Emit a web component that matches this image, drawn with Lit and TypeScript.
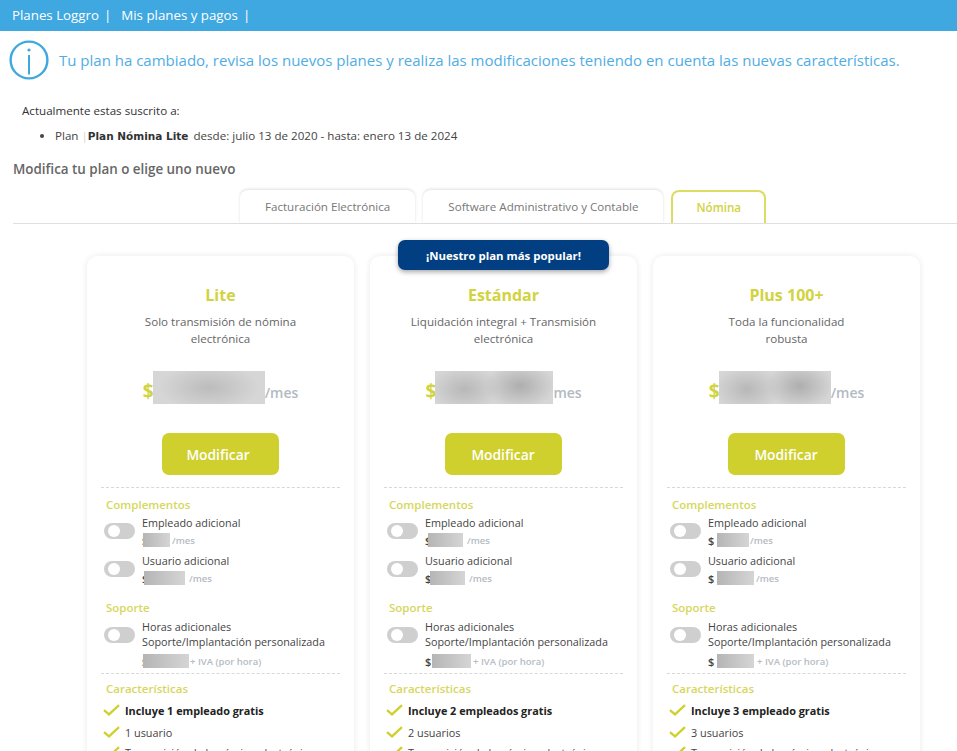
import { LitElement, html, css } from "lit";
import { customElement } from "lit/decorators.js";

interface Small { d: number; w: number; gap: number; }
interface Plan {
  name: string; desc: string[]; blur: number; mes: string; chk: string; users: string;
  e: Small; u: Small; s: Small; popular?: boolean; two?: boolean; btnPad: number;
}

const plans: Plan[] = [
  { name: "Lite", desc: ["Solo transmisión de nómina", "electrónica"], blur: 112, mes: "/mes", chk: "Incluye 1 empleado gratis", users: "1 usuario",
    e: { d: 1, w: 27, gap: 2 }, u: { d: 2, w: 41, gap: 4 }, s: { d: 1, w: 46, gap: 1 }, btnPad: 5 },
  { name: "Estándar", desc: ["Liquidación integral + Transmisión", "electrónica"], blur: 118, mes: "mes", chk: "Incluye 2 empleados gratis", users: "2 usuarios",
    e: { d: 3, w: 35, gap: 4 }, u: { d: 5, w: 35, gap: 4 }, s: { d: 7, w: 39, gap: 2 }, popular: true, two: true, btnPad: 1 },
  { name: "Plus 100+", desc: ["Toda la funcionalidad", "robusta"], blur: 112, mes: "/mes", chk: "Incluye 3 empleado gratis", users: "3 usuarios",
    e: { d: 9, w: 32, gap: 1 }, u: { d: 9, w: 37, gap: 2 }, s: { d: 9, w: 37, gap: 3 }, two: true, btnPad: 1 },
];

@customElement("app-root")
export class AppRoot extends LitElement {
  static styles = css`
    :host { display: block; width: 957px; height: 751px; overflow: hidden; background: #fff; font-family: "Open Sans", sans-serif; color: #444; }
    .bar { height: 31px; background: #3fa8e0; color: #fff; font-size: 13.3px; display: flex; align-items: center; padding-left: 12px; gap: 5px; box-sizing: border-box; padding-bottom: 1px; }
    .bar .sep { margin-right: 5px; }
    .info { display: flex; align-items: center; gap: 10px; padding: 9px 0 0 9px; height: 40px; }
    .info span { font-size: 15px; color: #50ade4; white-space: nowrap; }
    .cur { padding: 22px 0 0 22px; font-size: 11.6px; color: #333; height: 40px; }
    .cur .a { line-height: 17px; }
    .cur ul { margin: 8px 0 0; padding: 0 0 0 33px; line-height: 17px; color: #444; }
    .cur b { font-family: "DejaVu Sans", sans-serif; font-size: 10.5px; color: #333; margin-right: 2px; }
    .cur .pipe { color: #c9b9a5; font-weight: 300; }
    h2 { margin: 0; font-size: 13.4px; font-weight: 600; color: #666; padding: 17px 0 0 13px; line-height: 20px; }
    .tabs { display: flex; gap: 8px; margin: 10px 0 0 13px; padding-left: 227px; height: 34px; border-bottom: 1px solid #dfdfdf; }
    .tab { font-size: 11.6px; color: #777; background: #fff; border-radius: 8px 8px 0 0; box-shadow: 0 -1px 3px rgba(0,0,0,.13); padding: 0 25px; display: flex; align-items: center; height: 33px; margin-top: 1px; box-sizing: border-box; }
    .tab.on { color: #d1d33f; border: 2px solid #dcdc63; border-bottom: 0; box-shadow: none; padding: 0 23px; font-weight: 600; }
    .cards { display: flex; gap: 16px; padding: 32px 0 0 87px; }
    .card { position: relative; width: 267px; height: 600px; box-sizing: border-box; border-radius: 10px; box-shadow: 0 0 6px rgba(0,0,0,.09); padding: 28px 14px 0 14px; flex: none; }
    .pop { position: absolute; top: -16px; left: 28px; width: 211px; height: 30px; border-radius: 7px; background: #023f82; color: #fff; font-size: 11.4px; font-weight: 700; display: flex; align-items: center; justify-content: center; box-shadow: 0 2px 5px rgba(0,0,0,.35); }
    .name { text-align: center; font-size: 16px; font-weight: 700; color: #d1d33f; line-height: 22px; }
    .desc { text-align: center; font-size: 11.6px; color: #666; line-height: 17px; margin-top: 7px; }
    .price { display: flex; justify-content: center; align-items: center; height: 33px; margin-top: 24px; }
    .dollar { font-size: 19px; font-weight: 700; color: #d1d33f; margin-top: 6px; width: 10px; }
    .mes { font-size: 14px; font-weight: 600; color: #b3bac2; margin-top: 10px; }
    .blur { display: block; overflow: hidden; position: relative; flex: none; background: #d6d6d6; }
    .blur::after { content: ""; position: absolute; inset: 0; background: radial-gradient(ellipse 45% 70% at 50% 50%, #bcbcbc, transparent); }
    .blur.two::after { background: radial-gradient(ellipse 30% 70% at 25% 55%, #b8b8b8, transparent), radial-gradient(ellipse 30% 70% at 72% 45%, #aeaeae, transparent); }
    .btn { width: 117px; height: 42px; margin: 29px auto 0; box-sizing: border-box; background: #cfd02e; color: #fff; border-radius: 7px; font-size: 13.8px; font-weight: 600; display: flex; align-items: center; justify-content: center; }
    .dash { border-top: 1px dashed #d8d8d8; margin-top: 12px; }
    .sec { font-size: 11.5px; font-weight: 600; color: #d6d75c; padding-left: 5px; line-height: 16px; }
    .first { margin-top: 9px; }
    .row { display: flex; gap: 7px; padding-left: 3px; font-size: 10.8px; color: #444; line-height: 15px; }
    .row.one { height: 38px; }
    .tog { width: 31px; height: 16px; border-radius: 8px; background: #cfcfcf; position: relative; margin-top: 8px; flex: none; }
    .tog::after { content: ""; position: absolute; left: 4px; top: 2px; width: 12px; height: 12px; border-radius: 50%; background: #fff; }
    .small { display: flex; align-items: center; font-size: 9.5px; color: #b5bcc4; font-weight: 600; height: 18px; white-space: nowrap; padding-top: 2px; box-sizing: border-box; }
    .small.sup { height: 23px; padding-top: 1px; }
    .small .d { color: #444; font-size: 11px; flex: none; }
    .small .blur { height: 14px; background: linear-gradient(90deg, #b5b5b5, #d5d5d5); }
    .small .blur::after { display: none; }
    .chk { display: flex; align-items: center; gap: 5px; font-size: 10.85px; height: 22px; padding-left: 2px; color: #444; white-space: nowrap; }
    .chk.b { font-weight: 700; color: #222; }
    .chk.last { margin-top: -2px; }
  `;

  private check() {
    return html`<svg width="17" height="12" viewBox="0 0 17 12" fill="none"><path d="M1 6.2 L6 10.4 L16 1.2" stroke="#cfd02e" stroke-width="2.3"/></svg>`;
  }

  private small(s: Small, label: string, cls = "") {
    return html`<div class="small ${cls}"><span class="d" style="width:${s.d}px">$</span><i class="blur" style="width:${s.w}px;margin-right:${s.gap}px"></i><span>${label}</span></div>`;
  }

  private card(p: Plan) {
    return html`<div class="card">
      ${p.popular ? html`<div class="pop">¡Nuestro plan más popular!</div>` : ""}
      <div class="name">${p.name}</div>
      <div class="desc">${p.desc[0]}<br />${p.desc[1]}</div>
      <div class="price"><span class="dollar">$</span><i class="blur ${p.two ? "two" : ""}" style="width:${p.blur}px;height:33px"></i><span class="mes">${p.mes}</span></div>
      <div class="btn" style="padding-right:${p.btnPad}px">Modificar</div>
      <div class="dash"></div>
      <div class="sec first">Complementos</div>
      <div class="row one" style="margin-top:2px"><div class="tog"></div><div>Empleado adicional${this.small(p.e, "/mes")}</div></div>
      <div class="row one"><div class="tog"></div><div>Usuario adicional${this.small(p.u, "/mes")}</div></div>
      <div class="sec" style="margin-top:9px">Soporte</div>
      <div class="row" style="margin-top:3px"><div class="tog"></div><div>Horas adicionales<br />Soporte/Implantación personalizada${this.small(p.s, "+ IVA (por hora)", "sup")}</div></div>
      <div class="dash" style="margin-top:1px"></div>
      <div class="sec" style="margin-top:7px">Características</div>
      <div class="chk b" style="margin-top:2px">${this.check()}${p.chk}</div>
      <div class="chk">${this.check()}${p.users}</div>
      <div class="chk last">${this.check()}Transmisión de la nómina electrónica</div>
    </div>`;
  }

  render() {
    return html`
      <div class="bar"><span>Planes Loggro</span><span class="sep">|</span><span>Mis planes y pagos</span><span>|</span></div>
      <div class="info">
        <svg width="40" height="40" viewBox="0 0 40 40" fill="none"><circle cx="20" cy="20" r="18.4" stroke="#3fa8e0" stroke-width="2.4"/><circle cx="20" cy="10" r="1.6" fill="#3fa8e0"/><path d="M20 15V34.5" stroke="#3fa8e0" stroke-width="2"/></svg>
        <span>Tu plan ha cambiado, revisa los nuevos planes y realiza las modificaciones teniendo en cuenta las nuevas características.</span>
      </div>
      <div class="cur">
        <div class="a">Actualmente estas suscrito a:</div>
        <ul><li>Plan<span class="pipe">&nbsp;|</span><b>Plan Nómina Lite</b> desde: julio 13 de 2020 - hasta: enero 13 de 2024</li></ul>
      </div>
      <h2>Modifica tu plan o elige uno nuevo</h2>
      <div class="tabs">
        <div class="tab">Facturación Electrónica</div>
        <div class="tab">Software Administrativo y Contable</div>
        <div class="tab on">Nómina</div>
      </div>
      <div class="cards">${plans.map((p) => this.card(p))}</div>
    `;
  }
}
